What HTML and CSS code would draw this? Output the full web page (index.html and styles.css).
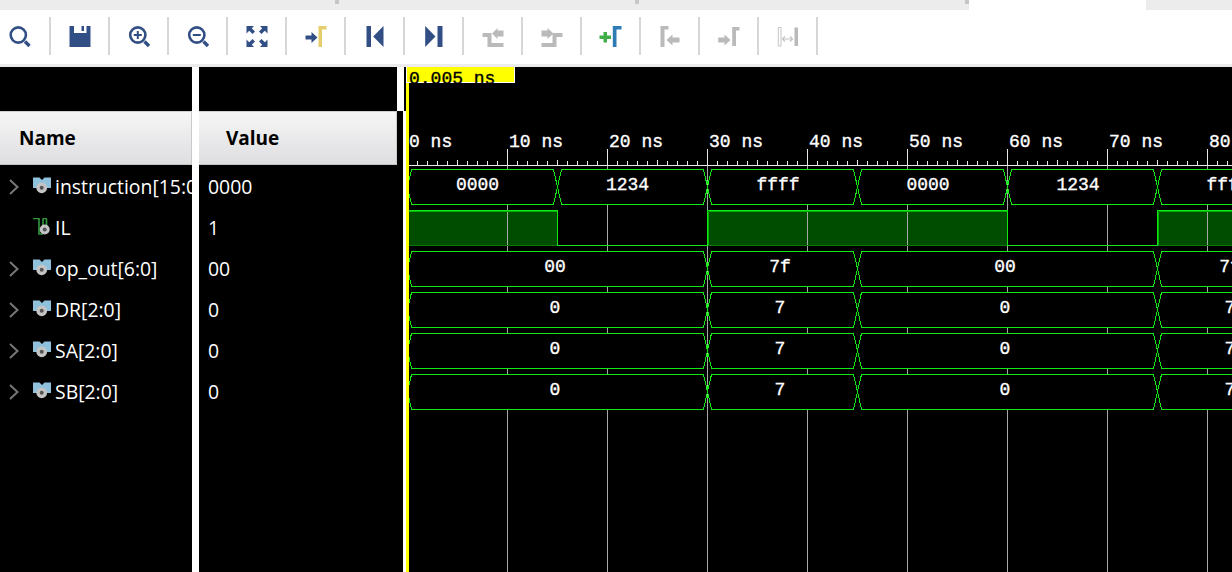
FILE: index.html
```html
<!DOCTYPE html>
<html lang="en">
<head>
<meta charset="utf-8">
<title>Waveform</title>
<link rel="stylesheet" href="styles.css">
</head>
<body>
<svg class="defs" width="0" height="0" aria-hidden="true">
  <defs>
    <symbol id="ic-bus" viewBox="0 0 20 20">
      <path class="bus-blue" d="M1 .5H7.5L10 3L12.5 .5H19V11H15A5.5 5.5 0 0 0 5 11H1Z"/>
      <circle class="pin" cx="9.7" cy="10.8" r="5.4"/>
      <circle class="pin-hole" cx="9.7" cy="10.8" r="2"/>
    </symbol>
    <symbol id="ic-bit" viewBox="0 0 20 20">
      <path class="bit-green" d="M1 .5H7V16H11M11 .5V9M14.5 .5V9M11 .5H14.5"/>
      <circle class="pin" cx="12.7" cy="11.5" r="5"/>
      <circle class="pin-hole" cx="12.7" cy="11.5" r="2"/>
    </symbol>
    <symbol id="ic-chev" viewBox="0 0 10 16">
      <path class="chev" d="M1 1L8.5 8L1 15"/>
    </symbol>
    <g id="busA">
      <path class="hex" d="M407.5 17.5L411.5 .5H703.5L707.5 17.5L703.5 35.5H411.5Z"/>
      <path class="hex" d="M707.5 17.5L711.5 .5H853.5L857.5 17.5L853.5 35.5H711.5Z"/>
      <path class="hex" d="M857.5 17.5L861.5 .5H1153.5L1157.5 17.5L1153.5 35.5H861.5Z"/>
      <path class="hex" d="M1157.5 17.5L1161.5 .5H1303.5L1307.5 17.5L1303.5 35.5H1161.5Z"/>
      <rect class="dot" x="706" y="12" width="3" height="3"/>
      <rect class="dot" x="706" y="21" width="3" height="3"/>
    </g>
    <pattern id="ticks" patternUnits="userSpaceOnUse" x="407" y="155" width="100" height="10">
      <rect class="tick" x="10" y="6" width="1" height="4"/>
      <rect class="tick" x="20" y="6" width="1" height="4"/>
      <rect class="tick" x="30" y="6" width="1" height="4"/>
      <rect class="tick" x="40" y="6" width="1" height="4"/>
      <rect class="tick" x="50" y="5" width="1" height="5"/>
      <rect class="tick" x="60" y="6" width="1" height="4"/>
      <rect class="tick" x="70" y="6" width="1" height="4"/>
      <rect class="tick" x="80" y="6" width="1" height="4"/>
      <rect class="tick" x="90" y="6" width="1" height="4"/>
    </pattern>
    <clipPath id="labelclip"><rect x="406" y="67" width="109" height="16"/></clipPath>
  </defs>
</svg>

<div class="tabs">
  <div class="tab t1"><span class="mark"></span></div>
  <div class="tab t2"><span class="mark"></span></div>
  <div class="tab t3"><span class="mark"></span></div>
  <div class="tab active"></div>
</div>

<div class="toolbar">
  <div class="tool first">
    <svg class="icon" viewBox="0 -.5 24 24"><circle class="ring" cx="10.3" cy="10.5" r="7.6"/><path class="handle" d="M17 17L21.5 21.5"/></svg>
  </div>
  <div class="tool">
    <svg class="icon" viewBox=".5 -.5 24 24"><path class="blue" d="M2 1.5H23V22.5H2Z"/><path class="white" d="M6.5 1.5H19V8.5H6.5Z"/><path class="blue" d="M14 1.5H16.5V6.5H14Z"/></svg>
  </div>
  <div class="tool">
    <svg class="icon" viewBox=".5 -.5 24 24"><circle class="ring" cx="11.3" cy="10.5" r="7.6"/><path class="handle" d="M18 17L22.5 21.5"/><path class="thin" d="M11.3 6.5V14.5M7.3 10.5H15.3"/></svg>
  </div>
  <div class="tool">
    <svg class="icon" viewBox=".5 -.5 24 24"><circle class="ring" cx="11.3" cy="10.5" r="7.6"/><path class="handle" d="M18 17L22.5 21.5"/><path class="thin" d="M7.3 10.5H15.3"/></svg>
  </div>
  <div class="tool">
    <svg class="icon" viewBox=".5 -.5 24 24"><path class="blue" d="M2 1.5H9.5L7.3 3.7L10.5 7L8 9.5L4.7 6.2L2 9Z"/><path class="blue" d="M23 1.5H15.5L17.7 3.7L14.5 7L17 9.5L20.3 6.2L23 9Z"/><path class="blue" d="M2 22.5H9.5L7.3 20.3L10.5 17L8 14.5L4.7 17.8L2 15Z"/><path class="blue" d="M23 22.5H15.5L17.7 20.3L14.5 17L17 14.5L20.3 17.8L23 15Z"/></svg>
  </div>
  <div class="tool">
    <svg class="icon" viewBox=".5 -.5 24 24"><path class="blue" d="M2 11H8V7.5L14 13L8 18.5V15H2Z"/><path class="yellow" d="M15 1.5H23V5H18.5V22.5H15Z"/></svg>
  </div>
  <div class="tool">
    <svg class="icon" viewBox=".5 -.5 24 24"><path class="blue" d="M4 1.5H8.5V22.5H4Z"/><path class="blue" d="M10.7 12L21 1.5V22.5Z"/></svg>
  </div>
  <div class="tool">
    <svg class="icon" viewBox=".5 -.5 24 24"><path class="blue" d="M3.7 1.5L14 12L3.7 22.5Z"/><path class="blue" d="M16 1.5H21V22.5H16Z"/></svg>
  </div>
  <div class="tool">
    <svg class="icon" viewBox=".5 -.5 24 24"><path class="grey" d="M2 8.5H11V18.5H23V22.5H7V12.5H2Z"/><path class="grey" d="M11.5 9L17 3.5V6H23V12H17V14.5Z"/></svg>
  </div>
  <div class="tool">
    <svg class="icon" viewBox=".5 -.5 24 24"><path class="grey" d="M2 18.5H13V8.5H23V12.5H17V22.5H2Z"/><path class="grey" d="M14 9L8 3.5V6H2V12H8V14.5Z"/></svg>
  </div>
  <div class="tool">
    <svg class="icon" viewBox=".5 -.5 24 24"><path class="green" d="M5 7.5H8.5V11H12.5V14.5H8.5V18H5V14.5H1V11H5Z"/><path class="teal" d="M14.3 1.5H23V5H18V22.5H14.3Z"/></svg>
  </div>
  <div class="tool">
    <svg class="icon" viewBox=".5 -.5 24 24"><path class="grey" d="M3 1.5H11V5H7V22.5H3Z"/><path class="grey" d="M9 15.5L15 10V13H22V18H15V21Z"/></svg>
  </div>
  <div class="tool">
    <svg class="icon" viewBox=".5 -.5 24 24"><path class="grey" d="M1.7 13H8V10L14 15.5L8 21V18H1.7Z"/><path class="grey" d="M15.7 2.5H23V6H19.5V21.5H15.7Z"/></svg>
  </div>
  <div class="tool">
    <svg class="icon" viewBox=".5 -.5 24 24"><path class="outline" d="M2.8 3H5.5V21.5H2.8Z"/><path class="arrowline" d="M7 14.5H17M9.5 12L7 14.5L9.5 17M14.5 12L17 14.5L14.5 17"/><path class="grey" d="M19 3H22.5V21.5H19Z"/></svg>
  </div>
</div>
<div class="rule"></div>

<main class="main">
  <section class="pane names">
    <div class="pane-top"></div>
    <div class="pane-head"><span class="name-title">Name</span></div>
    <div class="row"><svg class="chevron"><use href="#ic-chev"/></svg><svg class="sig"><use href="#ic-bus"/></svg><span class="label">instruction[15:0]</span></div>
    <div class="row"><span class="chevron"></span><svg class="sig"><use href="#ic-bit"/></svg><span class="label">IL</span></div>
    <div class="row"><svg class="chevron"><use href="#ic-chev"/></svg><svg class="sig"><use href="#ic-bus"/></svg><span class="label">op_out[6:0]</span></div>
    <div class="row"><svg class="chevron"><use href="#ic-chev"/></svg><svg class="sig"><use href="#ic-bus"/></svg><span class="label">DR[2:0]</span></div>
    <div class="row"><svg class="chevron"><use href="#ic-chev"/></svg><svg class="sig"><use href="#ic-bus"/></svg><span class="label">SA[2:0]</span></div>
    <div class="row"><svg class="chevron"><use href="#ic-chev"/></svg><svg class="sig"><use href="#ic-bus"/></svg><span class="label">SB[2:0]</span></div>
  </section>
  <div class="split"></div>
  <section class="pane values">
    <div class="pane-top"></div>
    <div class="pane-head"><span class="value-title">Value</span></div>
    <div class="row val">0000</div>
    <div class="row val">1</div>
    <div class="row val">00</div>
    <div class="row val">0</div>
    <div class="row val">0</div>
    <div class="row val">0</div>
  </section>

  <svg class="wave" viewBox="397 67 835 505" width="835" height="505">
    <rect class="white" x="397" y="67" width="7" height="44"/>
    <rect class="white" x="403" y="111" width="3" height="461"/>

    <rect class="ilfill" x="409" y="211" width="148" height="35"/>
    <rect class="ilfill" x="708" y="211" width="299" height="35"/>
    <rect class="ilfill" x="1158" y="211" width="74" height="35"/>

    <path class="grid" d="M507.5 166V572M607.5 166V572M707.5 166V572M807.5 166V572M907.5 166V572M1007.5 166V572M1107.5 166V572M1207.5 166V572"/>

    <rect x="407" y="155" width="825" height="10" fill="url(#ticks)"/>
    <rect class="tick" x="409" y="165" width="823" height="1"/>
    <path class="major" d="M507.5 149V165M607.5 149V165M707.5 149V165M807.5 149V165M907.5 149V165M1007.5 149V165M1107.5 149V165M1207.5 149V165"/>

    <text class="mono" x="409" y="147">0 ns</text>
    <text class="mono" x="509" y="147">10 ns</text>
    <text class="mono" x="609" y="147">20 ns</text>
    <text class="mono" x="709" y="147">30 ns</text>
    <text class="mono" x="809" y="147">40 ns</text>
    <text class="mono" x="909" y="147">50 ns</text>
    <text class="mono" x="1009" y="147">60 ns</text>
    <text class="mono" x="1109" y="147">70 ns</text>
    <text class="mono" x="1209" y="147">80 ns</text>

    <path class="hex" d="M407.5 187L411.5 169.5H553.5L557.5 187L553.5 204.5H411.5Z"/>
    <path class="hex" d="M557.5 187L561.5 169.5H703.5L707.5 187L703.5 204.5H561.5Z"/>
    <path class="hex" d="M707.5 187L711.5 169.5H853.5L857.5 187L853.5 204.5H711.5Z"/>
    <path class="hex" d="M857.5 187L861.5 169.5H1003.5L1007.5 187L1003.5 204.5H861.5Z"/>
    <path class="hex" d="M1007.5 187L1011.5 169.5H1153.5L1157.5 187L1153.5 204.5H1011.5Z"/>
    <path class="hex" d="M1157.5 187L1161.5 169.5H1303.5L1307.5 187L1303.5 204.5H1161.5Z"/>
    <rect class="dot" x="706" y="181" width="3" height="3"/>
    <rect class="dot" x="706" y="190" width="3" height="3"/>
    <rect class="dot" x="1006" y="181" width="3" height="3"/>
    <rect class="dot" x="1006" y="190" width="3" height="3"/>

    <use href="#busA" y="251"/>
    <use href="#busA" y="292"/>
    <use href="#busA" y="333"/>
    <use href="#busA" y="374"/>

    <path class="illine" d="M409 210.5H557.5V245.5H707.5V210.5H1007.5V245.5H1157.5V210.5H1232"/>
    <path class="ilshade" d="M409 211.5H557M708.5 211.5V245M708.5 211.5H1007M1158.5 211.5V245M1158.5 211.5H1232"/>
    <path class="ildark" d="M409 245.5H557M708 245.5H1007M1158 245.5H1232"/>

    <text class="mono mid" x="477.5" y="190">0000</text>
    <text class="mono mid" x="627.5" y="190">1234</text>
    <text class="mono mid" x="778" y="190">ffff</text>
    <text class="mono mid" x="928" y="190">0000</text>
    <text class="mono mid" x="1078" y="190">1234</text>
    <text class="mono mid" x="1228" y="190">ffff</text>

    <text class="mono mid" x="555" y="272">00</text>
    <text class="mono mid" x="780" y="272">7f</text>
    <text class="mono mid" x="1005" y="272">00</text>
    <text class="mono mid" x="1230" y="272">7f</text>

    <text class="mono mid" x="555" y="313">0</text>
    <text class="mono mid" x="780" y="313">7</text>
    <text class="mono mid" x="1005" y="313">0</text>
    <text class="mono mid" x="1230" y="313">7</text>

    <text class="mono mid" x="555" y="354">0</text>
    <text class="mono mid" x="780" y="354">7</text>
    <text class="mono mid" x="1005" y="354">0</text>
    <text class="mono mid" x="1230" y="354">7</text>

    <text class="mono mid" x="555" y="395">0</text>
    <text class="mono mid" x="780" y="395">7</text>
    <text class="mono mid" x="1005" y="395">0</text>
    <text class="mono mid" x="1230" y="395">7</text>

    <rect class="cursor" x="406" y="67" width="3" height="505"/>
    <rect class="flag" x="406.5" y="66.5" width="108" height="16"/>
    <text class="mono flagtext" x="409" y="84" clip-path="url(#labelclip)">0.005 ns</text>
  </svg>
</main>
</body>
</html>
```

FILE: styles.css
```css
* { box-sizing: border-box; }

html, body {
  margin: 0;
  height: 100%;
  background: #000;
  overflow: hidden;
}

body {
  display: flex;
  flex-direction: column;
  width: 1232px;
  height: 572px;
  font-family: "Open Sans", "Noto Sans", sans-serif;
}

.defs { display: block; height: 0; }

/* tab strip */
.tabs {
  display: flex;
  height: 10px;
  background: #ececec;
  flex: none;
}
.tab { display: flex; justify-content: flex-end; }
.t1 { width: 339px; }
.t2 { width: 300px; }
.t3 { width: 330px; }
.active { width: 177px; background: #fff; }
.mark { width: 4px; height: 4px; background: #c6c6c6; }

/* toolbar */
.toolbar {
  display: flex;
  flex: none;
  height: 54px;
  padding-top: 7px;
  background: #fff;
}
.tool {
  flex: none;
  display: flex;
  justify-content: center;
  align-items: center;
  width: 59px;
  height: 38px;
  border-right: 2px solid #d6d6d6;
}
.tool.first { width: 51px; padding-right: 9px; }
.icon { width: 24px; height: 24px; display: block; flex: none; }

.blue { fill: #324f85; }
.white { fill: #fff; }
.grey { fill: #bababa; }
.yellow { fill: #e3cd6c; }
.green { fill: #3fae49; }
.teal { fill: #2f7cb5; }
.ring { fill: none; stroke: #324f85; stroke-width: 2.6; }
.handle { fill: none; stroke: #324f85; stroke-width: 3.4; }
.thin { fill: none; stroke: #324f85; stroke-width: 2; }
.outline { fill: #fff; stroke: #c4c4c4; stroke-width: 1; }
.arrowline { fill: none; stroke: #c4c4c4; stroke-width: 1.2; }

.rule { flex: none; height: 3px; background: #ececec; }

/* main area */
.main {
  flex: 1;
  display: flex;
  min-height: 0;
  background: #000;
}
.pane { flex: none; overflow: hidden; color: #fff; }
.names { width: 192px; }
.values { width: 198px; }
.split { flex: none; width: 7px; background: #fff; }
.pane-top { height: 44px; }
.pane-head {
  display: flex;
  align-items: center;
  height: 54px;
  color: #000;
  font-size: 19px;
  font-weight: 700;
  background: linear-gradient(#f6f6f6, #dedee1);
  border-top: 1px solid #cfcfcf;
  border-bottom: 1px solid #c4c4c4;
  border-right: 1px solid #c9c9c9;
}
.name-title { margin-left: 19px; }
.value-title { margin-left: 27px; }

.row {
  display: flex;
  align-items: center;
  height: 41px;
  font-size: 19.4px;
  white-space: nowrap;
  color: #fff;
}
.names .row:nth-child(3) { margin-top: 1px; }
.values .row:nth-child(3) { margin-top: 1px; }
.val { padding-left: 9px; padding-bottom: 1px; }

.chevron { flex: none; width: 10px; height: 16px; margin-left: 9px; margin-right: 13px; }
.sig { flex: none; width: 20px; height: 20px; margin-right: 3px; overflow: visible; }
.label { flex: none; padding-bottom: 1px; }

.bus-blue { fill: #8fc1dd; }
.bit-green { fill: none; stroke: #2f9a3c; stroke-width: 1.6; }
.pin { fill: #c4c4c4; }
.pin-hole { fill: #555; }
.chev { fill: none; stroke: #777; stroke-width: 2; }

/* waveform canvas */
.wave { flex: none; display: block; }
.grid { fill: none; stroke: #a8a8a8; stroke-width: 1; shape-rendering: crispEdges; }
.major { fill: none; stroke: #e8e8e8; stroke-width: 1; shape-rendering: crispEdges; }
.tick { fill: #e8e8e8; shape-rendering: crispEdges; }
.hex { fill: #000; stroke: #12e812; stroke-width: 1; shape-rendering: crispEdges; }
.dot { fill: #22ee22; shape-rendering: crispEdges; }
.ilfill { fill: #004d00; shape-rendering: crispEdges; }
.illine { fill: none; stroke: #12e812; stroke-width: 1; shape-rendering: crispEdges; }
.ilshade { fill: none; stroke: #00b000; stroke-width: 1; shape-rendering: crispEdges; }
.ildark { fill: none; stroke: #0a7a0a; stroke-width: 1; shape-rendering: crispEdges; }
.mono {
  font-family: "Liberation Mono", monospace;
  font-size: 18px;
  fill: #fff;
  stroke: #fff;
  stroke-width: .35px;
}
.mid { text-anchor: middle; }
.cursor { fill: #ffff00; shape-rendering: crispEdges; }
.flag { fill: #ffff00; stroke: #fff; stroke-width: 1; shape-rendering: crispEdges; }
.flagtext { fill: #000; stroke: #000; }
```
